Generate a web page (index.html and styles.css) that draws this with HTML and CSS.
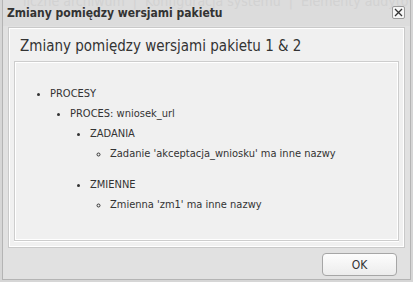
FILE: index.html
```html
<!DOCTYPE html>
<html lang="pl">
<head>
  <meta charset="UTF-8">
  <meta name="viewport" content="width=device-width, initial-scale=1.0">
  <title>Zmiany pomiędzy wersjami pakietu</title>
  <link rel="stylesheet" href="styles.css">
</head>
<body>

  <div class="dialog">
    <div class="titlebar">
      <span class="ghost">liczne archiwum &nbsp;|&nbsp; Konfiguracja systemu &nbsp;|&nbsp; Elementy audytowe &nbsp;|&nbsp; Ele</span>
      <span class="title">Zmiany pomiędzy wersjami pakietu</span>
      <button class="close" title="Zamknij">
        <svg width="9" height="9" viewBox="0 0 9 9">
          <path d="M1 1 L8 8 M8 1 L1 8" stroke="#333" stroke-width="1.3" fill="none"/>
        </svg>
      </button>
    </div>

    <div class="content">
      <h3>Zmiany pomiędzy wersjami pakietu 1 &amp; 2</h3>
      <div class="changes">
        <ul>
          <li>PROCESY
            <ul>
              <li>PROCES: wniosek_url
                <ul>
                  <li>ZADANIA
                    <ul class="last">
                      <li>Zadanie 'akceptacja_wniosku' ma inne nazwy</li>
                    </ul>
                  </li>
                  <li>ZMIENNE
                    <ul class="last">
                      <li>Zmienna 'zm1' ma inne nazwy</li>
                    </ul>
                  </li>
                </ul>
              </li>
            </ul>
          </li>
        </ul>
      </div>
    </div>

    <div class="buttons">
      <button class="btn">OK</button>
    </div>
  </div>

</body>
</html>
```

FILE: styles.css
```css
body {
  margin: 0;
  padding: 0;
  background-color: #d6d6d6;
  font-family: "DejaVu Sans Condensed", "DejaVu Sans", sans-serif;
  color: #333;
  overflow: hidden;
}

.dialog {
  margin-left: 2px;
  width: 407px;
  height: 279px;
  border: 1px solid #b4b4b4;
  border-top: none;
  background-color: #e1e1e1;
  display: flex;
  flex-direction: column;
}

.titlebar {
  position: relative;
  height: 26px;
  display: flex;
  align-items: center;
  padding: 0 5px 0 4px;
  background-color: #dcdcdc;
  overflow: hidden;
}

.ghost {
  position: absolute;
  top: -7px;
  left: 20px;
  white-space: nowrap;
  font-size: 14px;
  color: #d2d2d2;
}

.title {
  position: relative;
  flex: 1;
  font-size: 12px;
  font-weight: bold;
  color: #333;
}

.close {
  position: relative;
  width: 13px;
  height: 13px;
  padding: 0;
  margin-top: -1px;
  border: 1px solid #9a9a9a;
  border-radius: 2px;
  background: #f6f6f6;
  display: flex;
  align-items: center;
  justify-content: center;
}

.content {
  margin: 1px 5px 0 5px;
  height: 213px;
  border: 1px solid #c9c9c9;
  box-shadow: inset 0 0 0 1px #fff;
  background-color: #f0f0f0;
  padding: 0 5px 6px 5px;
  display: flex;
  flex-direction: column;
}

h3 {
  margin: 0;
  height: 33px;
  line-height: 36px;
  padding-left: 6px;
  font-size: 15px;
  font-weight: normal;
  color: #333;
}

.changes {
  flex: 1;
  border: 1px solid #cdcdcd;
  box-shadow: inset 0 0 0 1px #fff, 0 1px 0 #fff;
  padding: 22px 0 0 0;
}

ul {
  margin: 0;
  padding-left: 20px;
  list-style-type: disc;
  font-size: 11px;
  line-height: 20px;
}

.changes > ul {
  padding-left: 35px;
}

ul.last {
  list-style-type: circle;
  margin-bottom: 11px;
}

.buttons {
  flex: 1;
  display: flex;
  justify-content: flex-end;
  align-items: center;
  padding-right: 13px;
}

.btn {
  width: 75px;
  height: 23px;
  margin-top: 2px;
  border: 1px solid #a6a6a6;
  border-radius: 4px;
  background: linear-gradient(#fdfdfd, #ececec);
  font-family: "DejaVu Sans Condensed", "DejaVu Sans", sans-serif;
  font-size: 12px;
  color: #333;
  cursor: pointer;
}
```
